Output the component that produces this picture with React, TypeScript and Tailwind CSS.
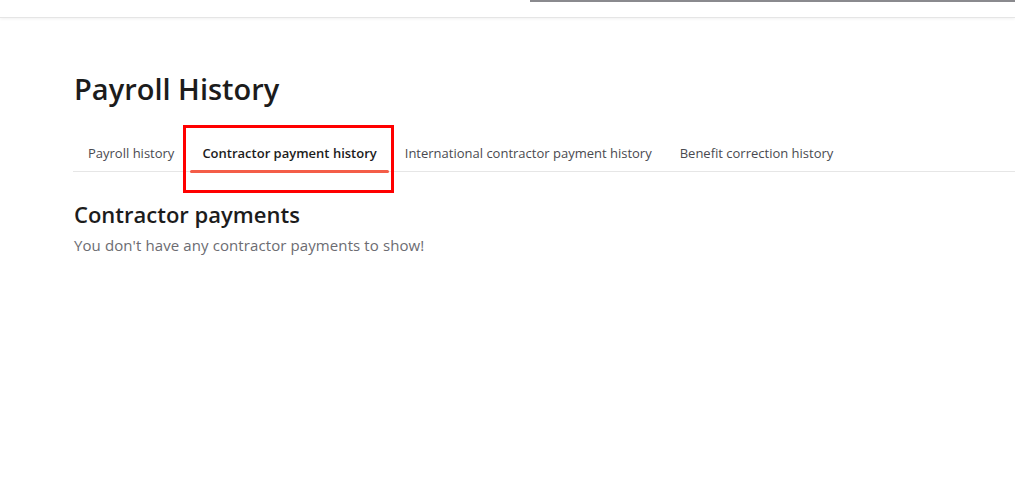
import React from "react";

const tabs = [
  "Payroll history",
  "Contractor payment history",
  "International contractor payment history",
  "Benefit correction history",
];

export default function App() {
  return (
    <div
      className="w-[1015px] h-[479px] bg-white overflow-hidden relative"
      style={{ fontFamily: "'Open Sans', Lato, sans-serif" }}
    >
      <header className="h-[18px] border-b border-[#e5e5e5] shadow-[0_1px_3px_rgba(0,0,0,0.06)] flex justify-end">
        <div className="w-[485px] h-[2px] bg-[#8a8a8e]" />
      </header>
      <main className="pl-[73px]">
        <h1 className="mt-[52px] ml-[1px] text-[29px] leading-[38px] font-semibold text-[#1c1c1c]">
          Payroll History
        </h1>
        <div className="mt-[27px] flex gap-[4px] border-b border-[#e6e6e6] h-[37px] relative">
          {tabs.map((t, i) => (
            <div
              key={t}
              className={
                i === 1
                  ? "relative px-3 pt-[9px] text-[13px] font-semibold text-[#1c1c1c]"
                  : "px-3 pt-[9px] text-[13px] font-medium text-[#4a4a50]"
              }
              style={{ paddingLeft: i === 0 ? 15 : undefined }}
            >
              {t}
              {i === 1 && (
                <div className="absolute left-0 right-0 bottom-[-2px] h-[3px] bg-[#f45d48] rounded-full" />
              )}
              {i === 1 && (
                <div className="absolute left-[-7px] right-[-5px] top-[-10px] h-[68px] border-[3px] border-[#ff0000]" />
              )}
            </div>
          ))}
        </div>
        <h2 className="mt-[28px] ml-[1px] text-[22px] leading-[28px] font-semibold text-[#1c1c1c]">
          Contractor payments
        </h2>
        <p className="mt-[6px] ml-[1px] text-[15px] tracking-[0.1px] text-[#6c6c72]">
          You don't have any contractor payments to show!
        </p>
      </main>
    </div>
  );
}
